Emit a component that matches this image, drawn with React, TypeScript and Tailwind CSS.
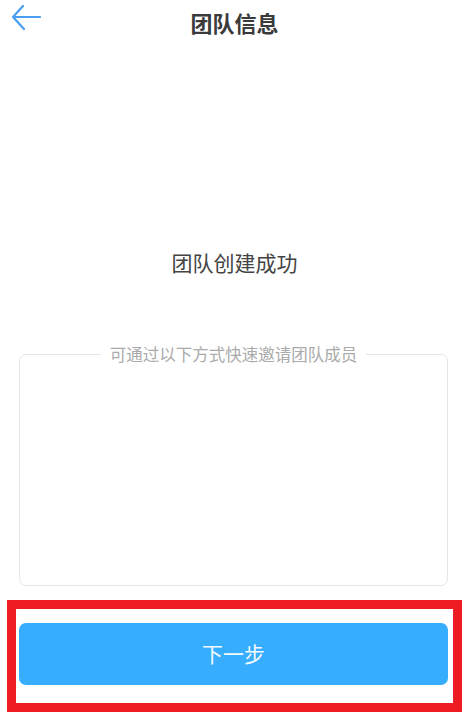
const font = {
  fontFamily: '"Noto Sans CJK SC", "Noto Sans", sans-serif',
};

function BackArrow() {
  return (
    <svg width="30" height="28" viewBox="0 0 30 28" fill="none">
      <path
        d="M29 13H2M12 2L2 13L13 25"
        stroke="#4a9ef0"
        strokeWidth="2.2"
        strokeLinecap="round"
        strokeLinejoin="round"
      />
    </svg>
  );
}

function Header() {
  return (
    <div className="relative flex h-[44px] items-center justify-center">
      <button className="absolute left-[11px] top-[4px]">
        <BackArrow />
      </button>
      <h1 className="text-[22px] font-bold leading-none text-[#3a3a3a]">
        团队信息
      </h1>
    </div>
  );
}

function InviteCard() {
  return (
    <fieldset className="ml-[19px] mr-[21px] mt-[68px] h-[242px] rounded-[7px] border border-[#e6e6e6] px-0">
      <legend className="mx-auto px-[9px] text-[16.5px] leading-[20px] text-[#aaaaaa]">
        可通过以下方式快速邀请团队成员
      </legend>
    </fieldset>
  );
}

export default function App() {
  return (
    <div className="min-h-[720px] w-full bg-white" style={font}>
      <Header />
      <p className="mt-[204px] text-center text-[21px] leading-[28px] text-[#444444]">
        团队创建成功
      </p>
      <InviteCard />
      <div className="mx-[7px] mt-[14px] border-[9px] border-[#ee1c25] pb-[18px] pl-[3px] pr-[5px] pt-[14px]">
        <button className="flex h-[62px] w-full items-center justify-center rounded-[7px] bg-[#37adfd] text-[21px] text-[#f2f9ff]">
          下一步
        </button>
      </div>
    </div>
  );
}
